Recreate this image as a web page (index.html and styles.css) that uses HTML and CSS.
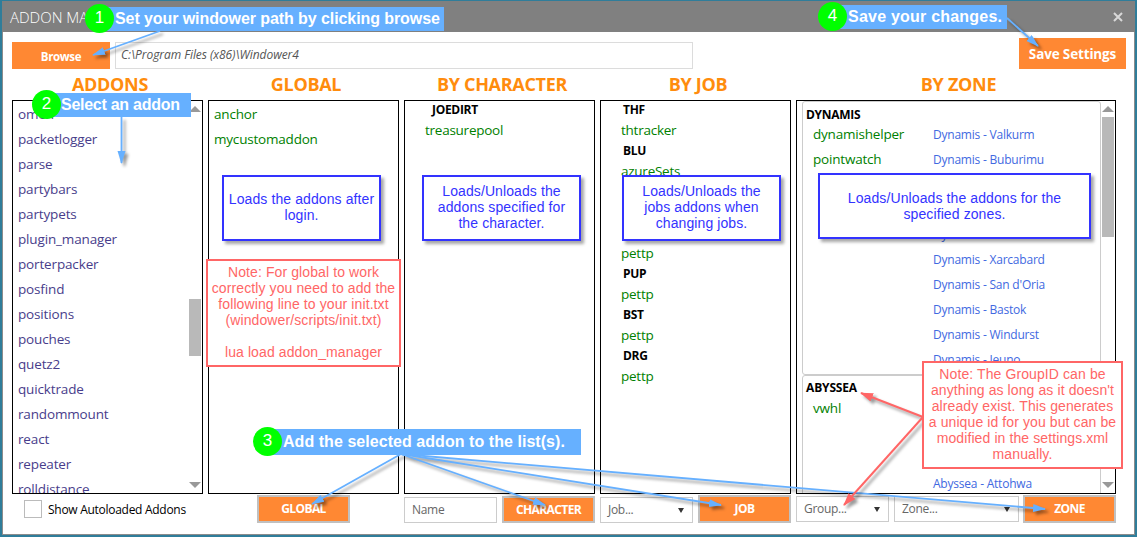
FILE: index.html
```html
<!DOCTYPE html>
<html lang="en">
<head>
<meta charset="utf-8">
<title>Addon Manager</title>
<link rel="stylesheet" href="styles.css">
</head>
<body>
<div class="window">
  <header class="titlebar">
    <span class="title">ADDON MANAGER</span>
    <svg class="close" width="10" height="10" viewBox="0 0 10 10"><path d="M1 1L9 9M9 1L1 9"/></svg>
  </header>
  <div class="pathrow">
    <button class="btn browse">Browse</button>
    <div class="path">C:\Program Files (x86)\Windower4</div>
    <button class="btn save">Save Settings</button>
  </div>
  <main class="columns">
    <section class="column">
      <h2>ADDONS</h2>
      <div class="list addons">
        <ul class="items">
          <li>omen</li><li>packetlogger</li><li>parse</li><li>partybars</li><li>partypets</li><li>plugin_manager</li><li>porterpacker</li><li>posfind</li><li>positions</li><li>pouches</li><li>quetz2</li><li>quicktrade</li><li>randommount</li><li>react</li><li>repeater</li><li>rolldistance</li>
        </ul>
        <div class="scroll"><i class="up"></i><i class="thumb low"></i><i class="down"></i></div>
      </div>
      <div class="controls auto"><span class="check"></span><span>Show Autoloaded Addons</span></div>
    </section>
    <section class="column">
      <h2>GLOBAL</h2>
      <div class="list global"><ul class="items green"><li>anchor</li><li>mycustomaddon</li></ul></div>
      <div class="controls mid"><button class="btn add">GLOBAL</button></div>
    </section>
    <section class="column">
      <h2>BY CHARACTER</h2>
      <div class="list keyed"><h3>JOEDIRT</h3><p>treasurepool</p></div>
      <div class="controls"><div class="field">Name</div><button class="btn add short">CHARACTER</button></div>
    </section>
    <section class="column">
      <h2>BY JOB</h2>
      <div class="list keyed jobs">
        <h3>THF</h3><p>thtracker</p><h3>BLU</h3><p>azureSets</p>
        <p class="later">pettp</p><h3>PUP</h3><p>pettp</p><h3>BST</h3><p>pettp</p><h3>DRG</h3><p>pettp</p>
      </div>
      <div class="controls"><div class="field select">Job...</div><button class="btn add">JOB</button></div>
    </section>
    <section class="column">
      <h2 class="zonehead">BY ZONE</h2>
      <div class="list zones">
        <div class="groups">
          <article class="group dynamis">
            <h3>DYNAMIS</h3>
            <div class="pair">
              <ul class="items green"><li>dynamishelper</li><li>pointwatch</li></ul>
              <ul class="items places"><li>Dynamis - Valkurm</li><li>Dynamis - Buburimu</li><li class="skip">Dynamis - Beaucedine</li><li>Dynamis - Xarcabard</li><li>Dynamis - San d'Oria</li><li>Dynamis - Bastok</li><li>Dynamis - Windurst</li><li>Dynamis - Jeuno</li></ul>
            </div>
          </article>
          <article class="group abyssea">
            <h3>ABYSSEA</h3>
            <div class="pair">
              <ul class="items green"><li>vwhl</li></ul>
              <ul class="items places"><li class="last">Abyssea - Attohwa</li></ul>
            </div>
          </article>
        </div>
        <div class="scroll"><i class="up"></i><i class="thumb high"></i><i class="down"></i></div>
      </div>
      <div class="controls zonectl"><div class="field select raised">Group...</div><div class="field select raised wide">Zone...</div><button class="btn add">ZONE</button></div>
    </section>
  </main>
</div>

<div class="overlay">
  <div class="note blue n-global">Loads the addons after<br>login.</div>
  <div class="note blue n-char">Loads/Unloads the<br>addons specified for<br>the character.</div>
  <div class="note blue n-job">Loads/Unloads the<br>jobs addons when<br>changing jobs.</div>
  <div class="note blue n-zone">Loads/Unloads the addons for the<br>specified zones.</div>
  <div class="note red n-init">Note: For global to work<br>correctly you need to add the<br>following line to your init.txt<br>(windower/scripts/init.txt)<br><br>lua load addon_manager</div>
  <svg class="arrows" width="1137" height="537" viewBox="0 0 1137 537">
    <defs>
      <marker id="tipBlue" markerUnits="userSpaceOnUse" markerWidth="14" markerHeight="10" refX="12" refY="4" orient="auto"><path d="M0 0L13 4L0 8Z" fill="#66b0ff"/></marker>
      <marker id="tipRed" markerUnits="userSpaceOnUse" markerWidth="14" markerHeight="10" refX="12" refY="4.5" orient="auto"><path d="M0 0L13 4.500L0 9Z" fill="#ff6666"/></marker>
    </defs>
    <g class="line-blue">
      <path d="M160 31L93 55"/><path d="M121.500 117L121.500 163"/>
      <path d="M401 454L312 504"/><path d="M401 454L545 505"/><path d="M401 454L721 505"/><path d="M401 454L1045 509"/>
      <path d="M1007 18L1038 46"/>
    </g>
    <g class="line-red"><path d="M923 417L861 393"/><path d="M923 417L844 505"/></g>
  </svg>
  <div class="note red n-group">Note: The GroupID can be<br>anything as long as it doesn't<br>already exist. This generates<br>a unique id for you but can be<br>modified in the settings.xml<br>manually.</div>
  <div class="step s1"><b>1</b><span>Set your windower path by clicking browse</span></div>
  <div class="step s2"><b>2</b><span>Select an addon</span></div>
  <div class="step s3"><b>3</b><span>Add the selected addon to the list(s).</span></div>
  <div class="step s4"><b>4</b><span>Save your changes.</span></div>
</div>
</body>
</html>
```

FILE: styles.css
```css
* { box-sizing: border-box; }
body { margin: 0; width: 1137px; height: 537px; overflow: hidden; position: relative; background: #fff; font-family: "Open Sans", "Noto Sans", sans-serif; }
h2, h3, p, ul { margin: 0; padding: 0; }
ul { list-style: none; }

.window { width: 1137px; height: 537px; border: 2px solid #2f7d9a; border-top-width: 1px; box-shadow: inset 0 0 0 1px #8c8c8c; display: flex; flex-direction: column; }
.titlebar { height: 31px; flex: none; background: #808080; display: flex; align-items: center; justify-content: space-between; padding: 1px 12px 0 8px; }
.title { color: #fff; font-size: 15px; font-weight: 300; letter-spacing: 0; }
.close { stroke: #d8d8d8; stroke-width: 2; fill: none; }

.pathrow { height: 37px; flex: none; display: flex; align-items: flex-end; padding: 0 9px 0 10px; }
.btn { border: 0; margin: 0; padding: 0; background: #ff8833; color: #fff; font-family: inherit; font-weight: 700; display: flex; align-items: center; justify-content: center; white-space: nowrap; }
.browse { width: 98px; height: 27px; font-size: 11.500px; padding-top: 2px; letter-spacing: -0.35px; }
.path { width: 578px; height: 27px; margin-left: 5px; border: 1px solid #dcdcdc; padding-left: 5px; font-size: 12px; line-height: 24px; font-style: italic; color: #555; letter-spacing: -0.060px; }
.save { width: 107px; height: 31px; margin-left: auto; font-size: 13.500px; padding-top: 1px; letter-spacing: -0.15px; }

.columns { display: grid; grid-template-columns: repeat(4, 191px) 320px; gap: 5px; padding: 0 10px; }
.column { display: flex; flex-direction: column; }
h2 { height: 31px; text-align: center; font-size: 18px; line-height: 31px; font-weight: 700; color: #ff8c0d; padding-left: 5px; letter-spacing: -0.3px; }
.list { height: 394px; border: 1px solid #000; overflow: hidden; display: flex; }
.addons { color: #483d8b; justify-content: space-between; }
.addons .items { padding-left: 5px; }
.addons .items, .global .items { padding-top: 1px; }
.items li { height: 25px; line-height: 25px; font-size: 13.500px; white-space: nowrap; letter-spacing: -0.15px; }
.green, .keyed p { color: #008000; }
.green li { letter-spacing: -0.2px; }
.global { padding-left: 5px; }
h3 { font-size: 12px; font-weight: 700; line-height: 16px; height: 16px; color: #000; letter-spacing: -0.3px; }
.keyed { display: block; padding: 1px 0 0 20px; }
.keyed h3 { padding-left: 7px; line-height: 15px; }
.jobs h3 { padding-left: 2px; }
.keyed p { height: 25px; line-height: 25px; font-size: 13.500px; letter-spacing: -0.25px; }
.keyed .later { margin-top: 57px; }

.scroll { width: 15px; margin-left: auto; padding: 5px 2px 5px 0; display: flex; flex-direction: column; align-items: center; flex: none; }
.addons .scroll { width: 14px; padding-right: 1px; }
.zones .scroll { width: 14px; padding-right: 1px; }
.scroll i { flex: none; }
.up { border: 6px solid transparent; border-top: 0; border-bottom: 6px solid #999; }
.down { margin-top: auto; border: 6px solid transparent; border-bottom: 0; border-top: 6px solid #999; }
.thumb { width: 12px; background: #b9b9b9; }
.low { height: 57px; margin-top: 187px; }
.high { height: 120px; margin-top: 5px; }

.zones { padding-left: 5px; }
.groups { width: 299px; }
.group { border: 1px solid #ccc; border-radius: 3px; padding: 5px 0 0 3px; }
.group h3 { line-height: 15px; height: 15px; }
.abyssea h3 { letter-spacing: -0.15px; line-height: 14px; }
.dynamis { height: 274px; overflow: hidden; }
.abyssea { height: 130px; }
.pair { display: grid; grid-template-columns: 120px 1fr; padding-left: 7px; }
.places li { color: #4169e1; font-size: 12px; letter-spacing: -0.22px; }
.skip { margin-top: 50px; }
.last { margin-top: 75px; }

.controls { height: 29px; display: flex; align-items: flex-end; gap: 5px; }
.auto { align-items: center; padding: 1px 0 0 12px; gap: 6px; font-size: 12px; letter-spacing: -0.28px; white-space: nowrap; }
.check { width: 18px; height: 18px; border: 1px solid #bbb; flex: none; }
.mid { padding-left: 49px; }
.add { width: 93px; height: 28px; border: 2px solid #c0c0c0; font-size: 12px; padding: 0 0 1px; flex: none; letter-spacing: -0.6px; }
.short { height: 27px; }
.field { width: 93px; height: 26px; border: 1px solid #ccc; padding-left: 7px; line-height: 24px; font-size: 12px; color: #666; flex: none; letter-spacing: -0.3px; }
.select { display: flex; justify-content: space-between; padding-right: 8px; }
.select::after { content: ""; align-self: center; border: 3.500px solid transparent; border-top: 5px solid #333; border-bottom: 0; }
.raised { margin-bottom: 1px; }
.wide { width: 125px; }
.zonectl .add { margin-left: -1px; }

/* Guide annotations floating above the window */
.overlay { position: absolute; inset: 0; font-family: "Liberation Sans", Arial, sans-serif; }
.note { position: absolute; background: #fff; display: flex; align-items: center; justify-content: center; text-align: center; font-size: 14px; line-height: 16px; white-space: nowrap; letter-spacing: 0.1px; }
.blue { border: 2px solid #3333ff; color: #3333ff; box-shadow: 3px 3px 3px rgba(0,0,0,.35); }
.red { border: 2px solid #ff6666; color: #ff6666; }
.n-global { left: 222px; top: 175px; width: 159px; height: 66px; }
.n-char { left: 422px; top: 175px; width: 159px; height: 66px; }
.n-job { left: 622px; top: 175px; width: 159px; height: 66px; }
.n-zone { left: 818px; top: 173px; width: 273px; height: 66px; }
.n-init { left: 206px; top: 259px; width: 195px; height: 108px; }
.n-global, .n-char, .n-job, .n-init, .n-group { padding-bottom: 2px; }
.n-group { left: 922px; top: 361px; width: 201px; height: 108px; }
.arrows { position: absolute; left: 0; top: 0; }
.line-blue path, .line-red path { fill: none; }
.line-blue > path { stroke: #66b0ff; stroke-width: 1.800; marker-end: url(#tipBlue); }
.line-red > path { stroke: #ff6666; stroke-width: 2; marker-end: url(#tipRed); }
.line-blue, .line-red { filter: drop-shadow(3px 3px 1.500px rgba(0,0,0,.4)); }
.step { position: absolute; height: 29px; display: flex; align-items: center; white-space: nowrap; }
.step b { width: 29px; height: 29px; border-radius: 50%; background: #00ff00; color: #fff; font-weight: 400; font-size: 17px; line-height: 28px; text-align: center; position: relative; z-index: 1; flex: none; }
.step span { height: 24px; margin-left: -15px; padding-left: 16px; background: #66b0ff; color: #fff; font-weight: 700; font-size: 16px; line-height: 23px; }
.s1 { left: 85px; top: 4px; }
.s1 span { width: 345px; letter-spacing: -0.080px; }
.s2 { left: 32px; top: 90px; }
.s2 span { width: 145px; padding-left: 15px; letter-spacing: -0.27px; }
.s3 { left: 253px; top: 427px; }
.s3 span { width: 314px; height: 26px; line-height: 26px; letter-spacing: 0.050px; }
.s4 { left: 818px; top: 2px; }
.s4 span { width: 175px; letter-spacing: 0.22px; }
```
